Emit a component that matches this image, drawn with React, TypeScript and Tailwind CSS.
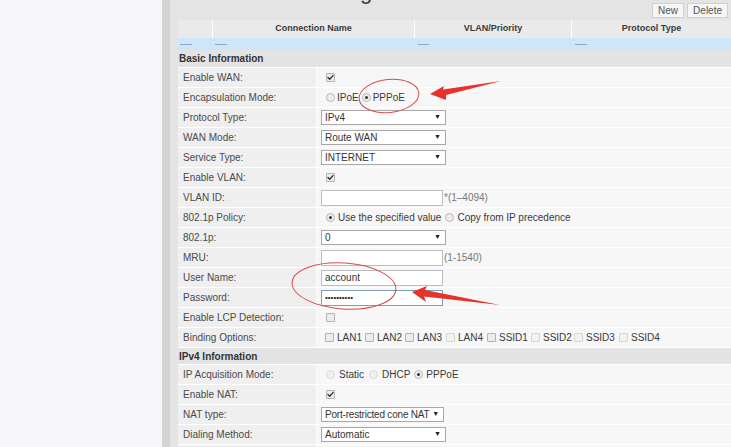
import type { ReactNode } from "react";

// WAN configuration page of a home gateway, with the red annotation marks drawn over it.

const FONT = { fontFamily: '"Liberation Sans", Arial, sans-serif' };

function Check({ on = false, dim = false }: { on?: boolean; dim?: boolean }) {
  return (
    <span
      className={`inline-flex items-center justify-center w-[9px] h-[9px] rounded-[1px] border ${
        dim ? "border-[#d6d6d6] bg-[#f1f1f1]" : "border-[#b3b3b3] bg-[#ececec]"
      }`}
    >
      {on && (
        <svg width="7" height="7" viewBox="0 0 7 7" fill="none">
          <path d="M1 3.6l1.7 1.7L6 1.6" stroke="#333" strokeWidth="1.4" strokeLinecap="round" strokeLinejoin="round" />
        </svg>
      )}
    </span>
  );
}

function Radio({ on = false, dim = false }: { on?: boolean; dim?: boolean }) {
  return (
    <span
      className={`inline-flex items-center justify-center w-[9px] h-[9px] rounded-full border ${
        dim ? "border-[#dadada] bg-[#f0f0f0]" : "border-[#b8b8b8] bg-[#ededed]"
      }`}
    >
      {on && <span className="w-[3px] h-[3px] rounded-full bg-[#333]" />}
    </span>
  );
}

function Select({ value, w = "w-[125px]" }: { value: string; w?: string }) {
  return (
    <div
      className={`${w} h-[15px] border border-[#a8a8a8] bg-white flex items-center justify-between pl-[3px] pr-[4px] text-[#333] whitespace-nowrap overflow-hidden`}
    >
      <span>{value}</span>
      <span className="text-[7px] text-[#222] ml-[2px]">▼</span>
    </div>
  );
}

function Input({ children, focus = false }: { children?: ReactNode; focus?: boolean }) {
  return (
    <div
      className={`w-[122px] h-[16px] border bg-white flex items-center pl-[3px] text-[#333] ${
        focus ? "border-[#7f9dbd]" : "border-[#bdbdbd]"
      }`}
    >
      {children}
    </div>
  );
}

function Row({ label, children }: { label: string; children?: ReactNode }) {
  return (
    <div className="flex h-[20px] shrink-0 border-b border-white">
      <div className="w-[139px] shrink-0 bg-[#efefef] border-r border-white pl-[5px] flex items-center text-[#4a4a4a]">
        {label}
      </div>
      <div className="flex-1 bg-[#f7f7f7] pl-[4px] flex items-center text-[#3a3a3a]">{children}</div>
    </div>
  );
}

function Section({ title, h }: { title: string; h: string }) {
  return (
    <div className={`${h} shrink-0 bg-[#e3e3e3] border-b border-white pl-[1px] flex items-center font-bold text-[#333]`}>
      {title}
    </div>
  );
}

const BINDINGS: { name: string; dim: boolean; w: string }[] = [
  { name: "LAN1", dim: false, w: "w-[40px]" },
  { name: "LAN2", dim: false, w: "w-[40px]" },
  { name: "LAN3", dim: false, w: "w-[41px]" },
  { name: "LAN4", dim: true, w: "w-[41px]" },
  { name: "SSID1", dim: false, w: "w-[44px]" },
  { name: "SSID2", dim: true, w: "w-[43px]" },
  { name: "SSID3", dim: true, w: "w-[45px]" },
  { name: "SSID4", dim: true, w: "w-[45px]" },
];

export default function App() {
  return (
    <div className="relative w-[731px] h-[447px] overflow-hidden flex text-[10px]" style={FONT}>
      <div className="w-[162px] shrink-0 bg-[#f6f5f8]" />
      <div className="w-[8px] shrink-0 bg-[#d4d3d6]" />

      <div className="flex-1 bg-[#e4e4e4] pl-[8px] flex flex-col min-w-0">
        {/* title bar + buttons (the page title is scrolled mostly out of view) */}
        <div className="h-[20px] shrink-0 relative flex overflow-hidden">
          <div className="ml-[74px] -mt-[19px] text-[22px] leading-[22px] text-[#3a3a3a] whitespace-nowrap">
            WAN Configuration
          </div>
          <div className="absolute right-[3px] top-[3px] flex gap-[3px]">
            <button className="h-[15px] px-[5px] bg-[#f6f6f6] border border-[#d0d0d0] text-[#555] text-[10px] leading-none">
              New
            </button>
            <button className="h-[15px] px-[5px] bg-[#f6f6f6] border border-[#d0d0d0] text-[#555] text-[10px] leading-none">
              Delete
            </button>
          </div>
        </div>

        {/* connection table */}
        <div className="h-[18px] shrink-0 flex bg-[#eaeaea] font-bold text-[9px] text-[#3a3a3a]">
          <div className="w-[35px] border-r border-white" />
          <div className="w-[202px] border-r border-white flex items-center justify-center">Connection Name</div>
          <div className="w-[157px] border-r border-white flex items-center justify-center">VLAN/Priority</div>
          <div className="flex-1 flex items-center justify-center">Protocol Type</div>
        </div>
        <div className="h-[12px] shrink-0 flex bg-[#cfe5f9]">
          <div className="w-[35px] pl-[2px] flex items-center"><span className="w-[12px] h-px bg-[#8ea8c6]" /></div>
          <div className="w-[202px] pl-[2px] flex items-center"><span className="w-[12px] h-px bg-[#8ea8c6]" /></div>
          <div className="w-[157px] pl-[3px] flex items-center"><span className="w-[11px] h-px bg-[#8ea8c6]" /></div>
          <div className="flex-1 pl-[3px] flex items-center"><span className="w-[12px] h-px bg-[#8ea8c6]" /></div>
        </div>

        <Section title="Basic Information" h="h-[18px]" />
        <Row label="Enable WAN:"><span className="ml-[5px] flex"><Check on /></span></Row>
        <Row label="Encapsulation Mode:">
          <span className="ml-[5px] flex items-center gap-[2px]"><Radio /> IPoE</span>
          <span className="ml-[3px] flex items-center gap-[2px]"><Radio on /> PPPoE</span>
        </Row>
        <Row label="Protocol Type:"><Select value="IPv4" /></Row>
        <Row label="WAN Mode:"><Select value="Route WAN" /></Row>
        <Row label="Service Type:"><Select value="INTERNET" /></Row>
        <Row label="Enable VLAN:"><span className="ml-[5px] flex"><Check on /></span></Row>
        <Row label="VLAN ID:">
          <Input />
          <span className="ml-[1px] text-[#777]">*(1–4094)</span>
        </Row>
        <Row label="802.1p Policy:">
          <span className="ml-[5px] flex items-center gap-[3px]"><Radio on /> Use the specified value</span>
          <span className="ml-[4px] flex items-center gap-[3px]"><Radio /> Copy from IP precedence</span>
        </Row>
        <Row label="802.1p:"><Select value="0" /></Row>
        <Row label="MRU:">
          <Input />
          <span className="ml-[1px] text-[#777]">(1-1540)</span>
        </Row>
        <Row label="User Name:"><Input>account</Input></Row>
        <Row label="Password:">
          <Input focus>
            <span className="text-[8px] leading-none text-[#222]">••••••••••</span>
          </Input>
        </Row>
        <Row label="Enable LCP Detection:"><span className="ml-[5px] flex"><Check /></span></Row>
        <Row label="Binding Options:">
          <div className="ml-[4px] flex items-center">
            {BINDINGS.map((b) => (
              <span key={b.name} className={`${b.w} flex items-center gap-[3px]`}>
                <Check dim={b.dim} />
                {b.name}
              </span>
            ))}
          </div>
        </Row>

        <Section title="IPv4 Information" h="h-[17px]" />
        <Row label="IP Acquisition Mode:">
          <span className="ml-[5px] flex items-center gap-[4px]"><Radio dim /> Static</span>
          <span className="ml-[5px] flex items-center gap-[4px]"><Radio dim /> DHCP</span>
          <span className="ml-[4px] flex items-center gap-[3px]"><Radio on /> PPPoE</span>
        </Row>
        <Row label="Enable NAT:"><span className="ml-[5px] flex"><Check on /></span></Row>
        <Row label="NAT type:">
          <div className="tracking-[-0.2px]"><Select value="Port-restricted cone NAT" w="w-[123px]" /></div>
        </Row>
        <Row label="Dialing Method:"><Select value="Automatic" /></Row>
        <Row label="" />
      </div>

      {/* red hand-drawn annotations */}
      <svg className="absolute inset-0 pointer-events-none" width="731" height="447" viewBox="0 0 731 447">
        <ellipse cx="389" cy="96" rx="30" ry="16.5" transform="rotate(-6 389 96)" fill="none" stroke="#dc4a4a" strokeWidth="1" />
        <ellipse cx="344" cy="286" rx="52" ry="23" transform="rotate(4 344 286)" fill="none" stroke="#dc4a4a" strokeWidth="1" />
        <polygon points="430,94 444,86 443,89.5 501,81 446,95 446,100" fill="#e8322c" />
        <polygon points="412,292 427,286 425,290 500,305 424,296.5 426,302" fill="#e8322c" />
      </svg>
    </div>
  );
}
